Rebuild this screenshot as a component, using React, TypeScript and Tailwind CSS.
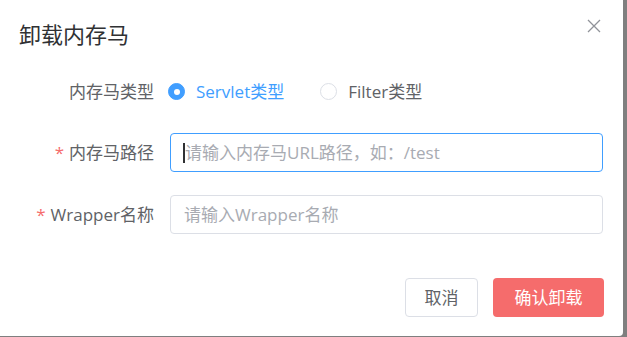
import React from 'react';

const font = { fontFamily: '"Open Sans", "Noto Sans CJK SC", sans-serif' };

function Radio({ label, checked }: { label: string; checked?: boolean }) {
  return (
    <label className="flex items-center cursor-pointer">
      <span
        className={
          checked
            ? 'w-[17px] h-[17px] rounded-full bg-[#409eff] border border-[#409eff] flex items-center justify-center'
            : 'w-[17px] h-[17px] rounded-full bg-white border border-[#dcdfe6]'
        }
      >
        {checked && <span className="w-[6px] h-[6px] rounded-full bg-white" />}
      </span>
      <span className={checked ? 'ml-[11px] text-[#409eff]' : 'ml-[11px] text-[#606266]'}>{label}</span>
    </label>
  );
}

function FormRow({ label, required, children }: { label: string; required?: boolean; children: React.ReactNode }) {
  return (
    <div className="flex items-center h-[39px]">
      <div className="w-[154px] text-right text-[#606266] shrink-0">
        {required && <span className="text-[#f56c6c] mr-[5px]">*</span>}
        {label}
      </div>
      {children}
    </div>
  );
}

export default function App() {
  return (
    <div className="w-[627px] h-[337px] bg-[#7f7f7f] overflow-hidden" style={font}>
      <div className="w-[623px] h-[336px] bg-white rounded-br-[4px] relative">
        <div className="pt-[19px] pl-[19px] text-[22px] leading-[30px] text-[#303133]">卸载内存马</div>
        <button className="absolute top-[19px] right-[22px] w-[14px] h-[14px] text-[#909399]">
          <svg viewBox="0 0 14 14" width="14" height="14" fill="none" stroke="currentColor" strokeWidth="1.3">
            <path d="M1 1L13 13M13 1L1 13" />
          </svg>
        </button>

        <div className="text-[17px] mt-[23px]">
          <FormRow label="内存马类型">
            <div className="ml-[14px] flex items-center gap-[36px]">
              <Radio label="Servlet类型" checked />
              <Radio label="Filter类型" />
            </div>
          </FormRow>
          <div className="mt-[22px]">
            <FormRow label="内存马路径" required>
              <div className="ml-[16px] w-[433px] h-[39px] border border-[#409eff] rounded-[4px] flex items-center pl-[12px]">
                <span className="w-[2px] h-[20px] bg-[#303133]" />
                <span className="text-[#a8abb2]">请输入内存马URL路径，如：/test</span>
              </div>
            </FormRow>
          </div>
          <div className="mt-[23px]">
            <FormRow label="Wrapper名称" required>
              <div className="ml-[16px] w-[433px] h-[39px] border border-[#dcdfe6] rounded-[4px] flex items-center pl-[13px]">
                <span className="text-[#a8abb2]">请输入Wrapper名称</span>
              </div>
            </FormRow>
          </div>
        </div>

        <div className="flex justify-end gap-[15px] pr-[19px] mt-[44px] text-[17px]">
          <button className="w-[73px] h-[39px] border border-[#dcdfe6] rounded-[4px] text-[#606266] bg-white">取消</button>
          <button className="w-[111px] h-[39px] rounded-[4px] text-white bg-[#f56c6c]">确认卸载</button>
        </div>
      </div>
    </div>
  );
}
